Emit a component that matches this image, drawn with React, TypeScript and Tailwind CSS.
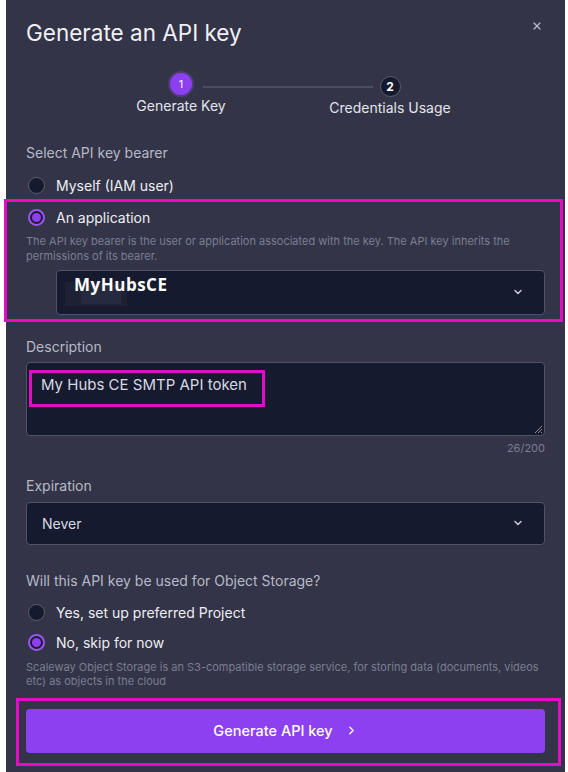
import React from 'react';
import { ChevronDown, ChevronRight, X } from 'lucide-react';

const Radio = ({ checked, label }: { checked?: boolean; label: string }) => (
  <label className="flex items-center gap-[11px] h-[22px]">
    {checked ? (
      <span className="w-[17px] h-[17px] rounded-full border-2 border-[#9a55f2] bg-[#1b1c2e] flex items-center justify-center">
        <span className="w-[9px] h-[9px] rounded-full bg-[#8c40ef]" />
      </span>
    ) : (
      <span className="w-[17px] h-[17px] rounded-full border border-[#5c5e70] bg-[#161a2e]" />
    )}
    <span className="text-[14px] text-[#eeeef4]">{label}</span>
  </label>
);

const App = () => {
  return (
    <div className="w-[568px] h-[772px] bg-white flex overflow-hidden" style={{ fontFamily: 'Inter, "Noto Sans", sans-serif' }}>
      <div className="ml-[6px] w-[559px] h-full bg-[#333447] px-5 pt-[18px] flex flex-col">
        <div className="flex justify-between items-start">
          <h1 className="text-[22.5px] leading-[30px] text-[#f0f0f5]">Generate an API key</h1>
          <X className="w-3 h-3 mt-[2px] mr-[2px] text-[#b8bacb]" strokeWidth={2.5} />
        </div>

        {/* stepper */}
        <div className="flex items-start mt-[25px] ml-[135px]">
          <div className="flex flex-col items-center w-[40px]">
            <span className="w-[22px] h-[22px] rounded-full bg-[#8c40ef] ring-2 ring-[#4e3c78] flex items-center justify-center text-[11px] text-white">1</span>
            <span className="whitespace-nowrap text-[14px] leading-5 mt-[1px] text-[#e4e4ec]">Generate Key</span>
          </div>
          <div className="h-[2px] w-[170px] bg-[#4b4d60] mt-[13px] ml-[2px]" />
          <div className="flex flex-col items-center w-[34px] mt-[3px]">
            <span className="w-[21px] h-[21px] rounded-full bg-[#161a2e] border border-[#5c5e70] flex items-center justify-center text-[12px] font-bold text-white">2</span>
            <span className="whitespace-nowrap text-[14px] leading-5 mt-[1px] text-[#e4e4ec]">Credentials Usage</span>
          </div>
        </div>

        <p className="text-[14px] text-[#b7b9c8] mt-[24px]">Select API key bearer</p>
        <div className="mt-[11px] ml-[2px]">
          <Radio label="Myself (IAM user)" />
        </div>

        <div className="border-[3px] border-[#e40cc6] -ml-[22px] -mr-[18px] mt-[3px] pl-[19px] pr-[15px] pt-[4px] pb-[4px]">
          <div className="ml-[2px]">
            <Radio checked label="An application" />
          </div>
          <p className="text-[11px] leading-[15px] text-[#7b7e91] mt-[6px]">
            The API key bearer is the user or application associated with the key. The API key inherits the permissions of its bearer.
          </p>
          <div className="ml-[30px] mt-[6px] h-[45px] rounded border border-[#50526a] bg-[#161a2e] flex items-start justify-between pr-[20px]">
            <div className="relative ml-[10px] mt-[1px]">
              <div className="absolute left-[-2px] top-[10px] w-[62px] h-[24px] bg-[#1e2134]" />
              <div className="absolute left-[14px] top-[12px] w-[40px] h-[20px] bg-[#262a3e]" />
              <span className="relative block px-[7px] text-[17px] font-bold tracking-[0.5px] text-white" style={{ fontFamily: '"Open Sans", "Noto Sans", sans-serif' }}>MyHubsCE</span>
            </div>
            <ChevronDown className="w-[12px] h-[12px] mt-[15px] text-[#c8c9d6]" strokeWidth={3} />
          </div>
        </div>

        <p className="text-[14px] text-[#b7b9c8] mt-[14px]">Description</p>
        <div className="relative mt-[5px] h-[74px] rounded border border-[#50526a] bg-[#161a2e] pl-[2px] pt-[7px]">
          <span className="inline-block border-[3px] border-[#e40cc6] pl-[9px] pr-[15px] pt-[2px] pb-[9px] text-[15px] leading-5 text-[#d8d9e2]">My Hubs CE SMTP API token</span>
          <svg className="absolute right-[1px] bottom-[1px]" width="9" height="9" viewBox="0 0 9 9">
            <path d="M8 1 L1 8 M8 4 L4 8 M8 7 L7 8" stroke="#8b8d9c" strokeWidth="1" />
          </svg>
        </div>
        <p className="text-right text-[11px] text-[#7b7e91] mt-[4px]">26/200</p>

        <p className="text-[14px] text-[#b7b9c8] mt-[18px]">Expiration</p>
        <div className="mt-[6px] h-[43px] rounded border border-[#50526a] bg-[#161a2e] flex items-center justify-between pl-[15px] pr-[20px]">
          <span className="text-[14px] text-[#d8d9e2]">Never</span>
          <ChevronDown className="w-[12px] h-[12px] text-[#c8c9d6]" strokeWidth={3} />
        </div>

        <p className="text-[14px] text-[#b7b9c8] mt-[25px]">Will this API key be used for Object Storage?</p>
        <div className="mt-[11px] ml-[2px] flex flex-col gap-[8px]">
          <Radio label="Yes, set up preferred Project" />
          <Radio checked label="No, skip for now" />
        </div>
        <p className="text-[11px] leading-[14px] text-[#7b7e91] mt-[6px]">
          Scaleway Object Storage is an S3-compatible storage service, for storing data (documents, videos etc) as objects in the cloud
        </p>

        <div className="border-[3px] border-[#e40cc6] -ml-[10px] -mr-[16px] mt-[10px] pl-[7px] pr-[13px] pt-[8px] pb-[10px]">
          <button className="w-full h-[44px] rounded bg-[#8c40ef] flex items-center justify-center gap-[12px] text-[14.5px] font-medium text-white">
            Generate API key
            <ChevronRight className="w-[13px] h-[13px]" strokeWidth={2.5} />
          </button>
        </div>
      </div>
    </div>
  );
};

export default App;
